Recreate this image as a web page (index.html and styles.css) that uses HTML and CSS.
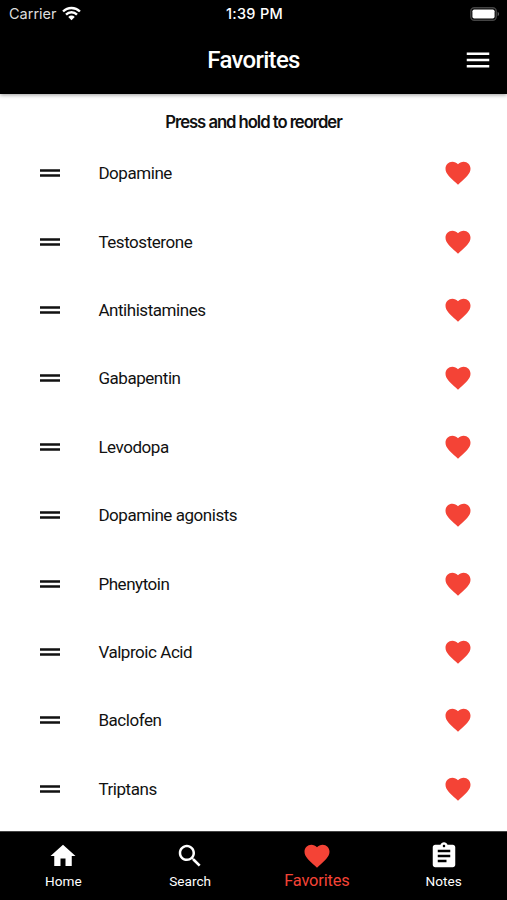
FILE: index.html
```html
<!DOCTYPE html>
<html lang="en">
<head>
  <meta charset="UTF-8" />
  <meta name="viewport" content="width=device-width, initial-scale=1" />
  <title>Favorites</title>
  <link rel="stylesheet" href="styles.css">
</head>
<body>
  <!-- Shared icons -->
  <svg class="sprite" xmlns="http://www.w3.org/2000/svg">
    <symbol id="heart" viewBox="0 0 24 24"><path d="M12 21.35l-1.45-1.32C5.4 15.36 2 12.28 2 8.5 2 5.42 4.42 3 7.5 3c1.74 0 3.41.81 4.5 2.09C13.09 3.81 14.76 3 16.5 3 19.58 3 22 5.42 22 8.5c0 3.78-3.4 6.86-8.55 11.54L12 21.35z"/></symbol>
    <symbol id="handle" viewBox="0 0 24 24"><path d="M20 9H4v2h16V9zM4 15h16v-2H4v2z"/></symbol>
  </svg>

  <header>
    <div class="status-bar">
      <div class="carrier">
        <span>Carrier</span>
        <svg class="wifi" viewBox="0 0 18 14">
          <path d="M1 5.1a11.4 11.4 0 0 1 16 0M3.8 8a7.4 7.4 0 0 1 10.4 0" fill="none" stroke="#fff" stroke-width="2.3"/>
          <path d="M5.9 10.2a4.4 4.4 0 0 1 6.2 0L9 13.4z" fill="#fff"/>
        </svg>
      </div>
      <div class="clock">1:39 PM</div>
      <div class="power">
        <svg class="battery" viewBox="0 0 30 14">
          <rect x=".8" y=".8" width="25.4" height="12.4" rx="3.5" fill="none" stroke="#444" stroke-width="1.4"/>
          <rect x="2.4" y="2.4" width="22.2" height="9.2" rx="1.8" fill="#fff"/>
          <path d="M27.7 4.8c1.8.7 1.8 3.7 0 4.4z" fill="#666"/>
        </svg>
      </div>
    </div>
    <div class="title-bar">
      <h1>Favorites</h1>
      <svg class="icon menu" viewBox="0 0 24 24"><path d="M3 18h18v-2H3v2zm0-5h18v-2H3v2zm0-7v2h18V6H3z"/></svg>
    </div>
  </header>

  <main>
    <p class="hint">Press and hold to reorder</p>
    <ul class="favorites">
      <li><svg class="icon"><use href="#handle"/></svg><span>Dopamine</span><svg class="icon liked"><use href="#heart"/></svg></li>
      <li><svg class="icon"><use href="#handle"/></svg><span>Testosterone</span><svg class="icon liked"><use href="#heart"/></svg></li>
      <li><svg class="icon"><use href="#handle"/></svg><span>Antihistamines</span><svg class="icon liked"><use href="#heart"/></svg></li>
      <li><svg class="icon"><use href="#handle"/></svg><span>Gabapentin</span><svg class="icon liked"><use href="#heart"/></svg></li>
      <li><svg class="icon"><use href="#handle"/></svg><span>Levodopa</span><svg class="icon liked"><use href="#heart"/></svg></li>
      <li><svg class="icon"><use href="#handle"/></svg><span>Dopamine agonists</span><svg class="icon liked"><use href="#heart"/></svg></li>
      <li><svg class="icon"><use href="#handle"/></svg><span>Phenytoin</span><svg class="icon liked"><use href="#heart"/></svg></li>
      <li><svg class="icon"><use href="#handle"/></svg><span>Valproic Acid</span><svg class="icon liked"><use href="#heart"/></svg></li>
      <li><svg class="icon"><use href="#handle"/></svg><span>Baclofen</span><svg class="icon liked"><use href="#heart"/></svg></li>
      <li><svg class="icon"><use href="#handle"/></svg><span>Triptans</span><svg class="icon liked"><use href="#heart"/></svg></li>
    </ul>
  </main>

  <nav>
    <a class="tab">
      <svg class="icon" viewBox="0 0 24 24"><path d="M10 20v-6h4v6h5v-8h3L12 3 2 12h3v8z"/></svg>
      <span>Home</span>
    </a>
    <a class="tab">
      <svg class="icon" viewBox="0 0 24 24"><path d="M15.5 14h-.79l-.28-.27C15.41 12.59 16 11.11 16 9.5 16 5.91 13.09 3 9.5 3S3 5.91 3 9.5 5.91 16 9.5 16c1.61 0 3.09-.59 4.23-1.57l.27.28v.79l5 4.99L20.49 19l-4.99-5zm-6 0C7.01 14 5 11.99 5 9.5S7.01 5 9.5 5 14 7.01 14 9.5 11.99 14 9.5 14z"/></svg>
      <span>Search</span>
    </a>
    <a class="tab active">
      <svg class="icon"><use href="#heart"/></svg>
      <span>Favorites</span>
    </a>
    <a class="tab">
      <svg class="icon" viewBox="0 0 24 24"><path d="M19 3h-4.18C14.4 1.84 13.3 1 12 1c-1.3 0-2.4.84-2.82 2H5c-1.1 0-2 .9-2 2v14c0 1.1.9 2 2 2h14c1.1 0 2-.9 2-2V5c0-1.1-.9-2-2-2zm-7 0c.55 0 1 .45 1 1s-.45 1-1 1-1-.45-1-1 .45-1 1-1zm2 14H7v-2h7v2zm3-4H7v-2h10v2zm0-4H7V7h10v2z"/></svg>
      <span>Notes</span>
    </a>
  </nav>
</body>
</html>
```
FILE: styles.css
```css
* {
  box-sizing: border-box;
}

body {
  margin: 0;
  height: 900px;
  display: flex;
  flex-direction: column;
  background: #fff;
  color: #111;
  font-family: Roboto, "Liberation Sans", sans-serif;
  overflow: hidden;
}

.sprite {
  display: none;
}

.icon {
  display: block;
  flex: none;
  width: 30px;
  height: 30px;
  fill: currentColor;
}

header {
  flex: none;
  height: 94px;
  background: #000;
  color: #fff;
  box-shadow: 0 1px 4px rgba(0, 0, 0, 0.4);
}

.status-bar {
  display: grid;
  grid-template-columns: 1fr auto 1fr;
  align-items: center;
  height: 27px;
  padding: 0 7px 0 9px;
  font-family: Inter, sans-serif;
  font-size: 14.5px;
}

.carrier {
  display: flex;
  align-items: center;
  gap: 5px;
  color: #ddd;
}

.wifi {
  width: 19px;
  height: 15px;
}

.clock {
  font-weight: 500;
  letter-spacing: 0.3px;
}

.power {
  display: flex;
  justify-content: flex-end;
}

.battery {
  width: 30px;
  height: 14px;
}

.title-bar {
  display: grid;
  grid-template-columns: 1fr auto 1fr;
  align-items: center;
  height: 66px;
  padding: 0 14.5px;
}

h1 {
  grid-column: 2;
  margin: 0;
  font-size: 24px;
  font-weight: 500;
  letter-spacing: -0.7px;
}

.menu {
  justify-self: end;
}

main {
  flex: 1;
}

.hint {
  margin: 0;
  height: 45px;
  padding-top: 18px;
  color: #111;
  font-family: Inter, sans-serif;
  font-size: 16.7px;
  font-weight: 600;
  line-height: 20px;
  letter-spacing: -1.05px;
  text-align: center;
}

.favorites {
  margin: 0;
  padding: 0;
  list-style: none;
}

.favorites li {
  display: flex;
  align-items: center;
  height: 68.4px;
  padding: 0 34px 0 35px;
  font-size: 17px;
  letter-spacing: -0.45px;
}

.favorites span {
  flex: 1;
  margin-left: 33.4px;
}

.liked {
  color: #f44336;
}

nav {
  flex: none;
  display: flex;
  height: 69px;
  border-top: 1px solid #444;
  background: #000;
  color: #fff;
}

.tab {
  flex: 1 1 0;
  display: flex;
  flex-direction: column;
  align-items: center;
  padding-top: 9px;
  font-size: 13.6px;
  line-height: 21px;
}

.active {
  color: #f44336;
  font-size: 16.4px;
  letter-spacing: -0.15px;
  line-height: 20px;
}
```
